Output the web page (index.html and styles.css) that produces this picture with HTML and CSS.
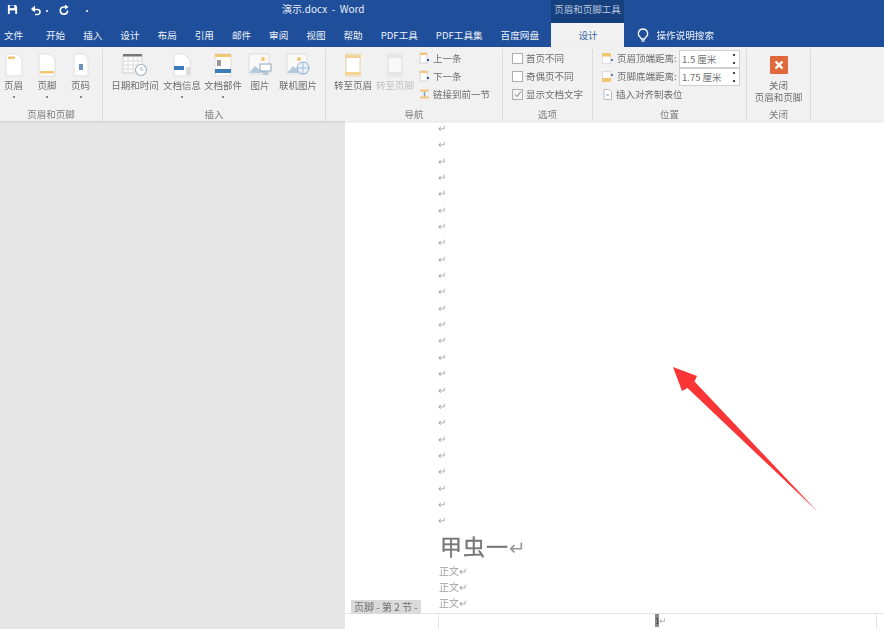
FILE: index.html
```html
<!DOCTYPE html>
<html lang="zh-CN">
<head>
  <meta charset="UTF-8" />
  <title>演示.docx - Word</title>
  <link rel="stylesheet" href="styles.css">
</head>
<body>
  <div class="window">
    <div class="titlebar">
      <div class="qat">
        <svg class="qat-save" width="11" height="11" viewBox="0 0 12 12"><path d="M1 1h8.500L11 2.500V11H1z" fill="#fff"/><rect x="3" y="1.500" width="5" height="3" fill="#1f4f9b"/><rect x="3" y="7" width="6" height="4" fill="#1f4f9b"/></svg>
        <svg class="qat-undo" width="12" height="12" viewBox="0 0 12 12"><path d="M2 5.500h5.500a2.500 2.500 0 0 1 0 5H5" fill="none" stroke="#fff" stroke-width="1.600"/><path d="M5 1.500v7L1 5z" fill="#fff"/></svg>
        <span class="qat-dot q1"></span>
        <svg class="qat-redo" width="12" height="12" viewBox="0 0 12 12"><path d="M7.500 3H5.500a3.600 3.600 0 1 0 4 3.500" fill="none" stroke="#fff" stroke-width="1.600"/><path d="M7 .5v5L10.500 3z" fill="#fff"/></svg>
        <span class="qat-dot q2"></span>
      </div>
      <div class="doc-title">演示.docx&nbsp; -&nbsp; Word</div>
      <div class="context-title">页眉和页脚工具</div>
    </div>

    <div class="tabs">
      <span class="tab tab-file">文件</span>
      <span class="tab">开始</span>
      <span class="tab">插入</span>
      <span class="tab">设计</span>
      <span class="tab">布局</span>
      <span class="tab">引用</span>
      <span class="tab">邮件</span>
      <span class="tab">审阅</span>
      <span class="tab">视图</span>
      <span class="tab">帮助</span>
      <span class="tab">PDF工具</span>
      <span class="tab">PDF工具集</span>
      <span class="tab">百度网盘</span>
      <span class="tab tab-active">设计</span>
      <span class="tell-me">
        <svg width="12" height="15" viewBox="0 0 12 15"><path d="M6 1a4.600 4.600 0 0 0-2.600 8.400L4.400 11h3.200l1-1.600A4.600 4.600 0 0 0 6 1z" fill="none" stroke="#fff" stroke-width="1.300"/><path d="M4.500 13h3" stroke="#fff" stroke-width="1.400"/></svg>
        操作说明搜索
      </span>
    </div>

    <div class="ribbon">
      <section class="group g-hf">
        <div class="group-body">
          <div class="rb rb-a">
            <svg class="rb-icon" width="20" height="24" viewBox="0 0 20 24"><path class="sheet" d="M2 1h11l5 5v17H2z"/><rect x="4" y="3.500" width="7" height="2.500" fill="#f3c674"/></svg>
            <span>页眉</span><i class="caret"></i>
          </div>
          <div class="rb rb-b">
            <svg class="rb-icon" width="20" height="24" viewBox="0 0 20 24"><path class="sheet" d="M2 1h11l5 5v17H2z"/><rect x="3" y="18" width="14" height="2.500" fill="#f3c674"/></svg>
            <span>页脚</span><i class="caret"></i>
          </div>
          <div class="rb rb-c">
            <svg class="rb-icon" width="20" height="24" viewBox="0 0 20 24"><path class="sheet" d="M3 1h10l4 5v17H3z"/><rect x="8" y="11" width="4" height="6" fill="#6f8fbd"/></svg>
            <span>页码</span><i class="caret"></i>
          </div>
        </div>
        <div class="group-label">页眉和页脚</div>
      </section>

      <section class="group g-insert">
        <div class="group-body">
          <div class="rb rb-date">
            <svg class="rb-icon" width="26" height="24" viewBox="0 0 26 24"><rect x="1" y="2" width="19" height="18" fill="#fbfbfb" stroke="#d2d2d2"/><rect x="1" y="1" width="19" height="2.500" fill="#777"/><path d="M1 8h19M1 12h19M1 16h19M6 4v16M11 4v16M16 4v16" stroke="#dcdcdc"/><circle cx="19" cy="17" r="5.500" fill="#fff" stroke="#9fb0c2" stroke-width="1.200"/><path d="M19 14v3h2.500" fill="none" stroke="#9fb0c2"/></svg>
            <span>日期和时间</span>
          </div>
          <div class="rb rb-info">
            <svg class="rb-icon" width="20" height="24" viewBox="0 0 20 24"><path class="sheet" d="M2 1h10l6 6v16H2z"/><rect x="2" y="13" width="10" height="4" fill="#3d7cb8"/><rect x="14" y="14" width="4" height="8" fill="#dcdcdc"/></svg>
            <span>文档信息</span><i class="caret"></i>
          </div>
          <div class="rb rb-part">
            <svg class="rb-icon" width="18" height="24" viewBox="0 0 18 24"><rect x="1" y="1" width="16" height="22" fill="#fff" stroke="#dcdcdc"/><rect x="1" y="1" width="16" height="3" fill="#f3c674"/><rect x="3" y="7" width="4" height="6" fill="#999"/><rect x="1" y="16" width="16" height="4" fill="#3d7cb8"/></svg>
            <span>文档部件</span><i class="caret"></i>
          </div>
          <div class="rb rb-pic">
            <svg class="rb-icon" width="24" height="24" viewBox="0 0 24 24"><rect x="1" y="1" width="20" height="20" fill="#f9f9f9" stroke="#dedede"/><circle cx="15" cy="6" r="2" fill="#f3c674"/><path d="M1 20l6-7 5 4 3-2 6 5z" fill="#b7cadc"/><rect x="12" y="11" width="11" height="7" fill="#fff" stroke="#8ea5bd"/><path d="M15 21h5" stroke="#8ea5bd"/></svg>
            <span>图片</span>
          </div>
          <div class="rb rb-online">
            <svg class="rb-icon" width="24" height="24" viewBox="0 0 24 24"><rect x="1" y="1" width="20" height="20" fill="#f9f9f9" stroke="#dedede"/><circle cx="13" cy="6" r="2" fill="#f3c674"/><path d="M1 20l6-7 5 4 3-2 6 5z" fill="#b7cadc"/><circle cx="17" cy="15" r="6" fill="#e9f1f8" stroke="#8eacce"/><path d="M17 9v12M11 15h12" stroke="#8eacce" stroke-width=".7"/></svg>
            <span>联机图片</span>
          </div>
        </div>
        <div class="group-label">插入</div>
      </section>

      <section class="group g-nav">
        <div class="group-body">
          <div class="rb rb-goto">
            <svg class="rb-icon" width="18" height="24" viewBox="0 0 18 24"><rect x="2" y="1" width="14" height="22" fill="#fff" stroke="#e8d2a6"/><rect x="1" y="2" width="16" height="3" fill="#f3d294"/><rect x="1" y="19" width="16" height="3" fill="#f3d294"/></svg>
            <span>转至页眉</span>
          </div>
          <div class="rb rb-goto off">
            <svg class="rb-icon" width="18" height="24" viewBox="0 0 18 24"><rect x="2" y="1" width="14" height="22" fill="#f8f8f8" stroke="#dcdcdc"/><rect x="1" y="2" width="16" height="3" fill="#e5e5e5"/><rect x="1" y="19" width="16" height="3" fill="#e5e5e5"/></svg>
            <span>转至页脚</span>
          </div>
          <div class="nav-list">
            <div class="row">
              <svg width="11" height="12" viewBox="0 0 11 12"><rect x="1" y="1" width="7" height="10" fill="#fff" stroke="#d2d2d2"/><rect x="1" y="1" width="7" height="2" fill="#f3c674"/><rect x="8" y="7" width="2" height="2" fill="#2a5a9c"/></svg>
              上一条
            </div>
            <div class="row">
              <svg width="11" height="12" viewBox="0 0 11 12"><rect x="1" y="1" width="7" height="10" fill="#fff" stroke="#d2d2d2"/><rect x="1" y="1" width="7" height="2" fill="#f3c674"/><rect x="8" y="7" width="2" height="2" fill="#2a5a9c"/></svg>
              下一条
            </div>
            <div class="row">
              <svg width="11" height="12" viewBox="0 0 11 12"><path d="M1 2.500h9M1 9.500h9" stroke="#f3c674" stroke-width="2"/><path d="M5.500 3.500v5" stroke="#7f9fc6" stroke-width="1.500"/></svg>
              链接到前一节
            </div>
          </div>
        </div>
        <div class="group-label">导航</div>
      </section>

      <section class="group g-opt">
        <div class="group-body">
          <div class="opt-list">
            <label class="row"><span class="check"></span>首页不同</label>
            <label class="row"><span class="check"></span>奇偶页不同</label>
            <label class="row"><span class="check checked"><svg width="8" height="8" viewBox="0 0 8 8"><path d="M1 4.500l2 2 4-5" fill="none" stroke="#777"/></svg></span>显示文档文字</label>
          </div>
        </div>
        <div class="group-label">选项</div>
      </section>

      <section class="group g-pos">
        <div class="group-body">
          <div class="pos-list">
            <div class="row">
              <svg width="11" height="11" viewBox="0 0 11 11"><rect x=".5" y=".5" width="8" height="10" fill="#fff" stroke="#ddd"/><rect x="0" y="0" width="9" height="3.500" fill="#f3c674"/><path d="M9 7h2" stroke="#2a5a9c" stroke-width="1.400"/></svg>
              <span class="pos-label">页眉顶端距离:</span>
              <span class="spin">1.5 厘米<i class="arrows"></i></span>
            </div>
            <div class="row">
              <svg width="11" height="11" viewBox="0 0 11 11"><rect x=".5" y=".5" width="8" height="10" fill="#fff" stroke="#ddd"/><rect x="0" y="7" width="9" height="4" fill="#f3c674"/><path d="M9 4h2" stroke="#2a5a9c" stroke-width="1.400"/></svg>
              <span class="pos-label">页脚底端距离:</span>
              <span class="spin">1.75 厘米<i class="arrows"></i></span>
            </div>
            <div class="row row-tab">
              <svg width="9" height="11" viewBox="0 0 9 11"><path d="M1 .5h5l2.500 2.500v7.500H1z" fill="#fff" stroke="#bdbdbd"/><path d="M3 6h3" stroke="#7f9fc6"/></svg>
              插入对齐制表位
            </div>
          </div>
        </div>
        <div class="group-label">位置</div>
      </section>

      <section class="group g-close">
        <div class="group-body">
          <div class="rb rb-close">
            <svg class="close-icon" width="18" height="18" viewBox="0 0 18 18"><rect width="18" height="18" rx="1" fill="#e0683a"/><path d="M5.500 5.500l7 7M12.500 5.500l-7 7" stroke="#fff" stroke-width="2.400"/></svg>
            <span>关闭<br>页眉和页脚</span>
          </div>
        </div>
        <div class="group-label">关闭</div>
      </section>
    </div>

    <div class="workspace">
      <aside class="nav-pane"></aside>
      <main class="page">
        <div class="body-text">
          <p class="mark">↵</p><p class="mark">↵</p><p class="mark">↵</p><p class="mark">↵</p><p class="mark">↵</p>
          <p class="mark">↵</p><p class="mark">↵</p><p class="mark">↵</p><p class="mark">↵</p><p class="mark">↵</p>
          <p class="mark">↵</p><p class="mark">↵</p><p class="mark">↵</p><p class="mark">↵</p><p class="mark">↵</p>
          <p class="mark">↵</p><p class="mark">↵</p><p class="mark">↵</p><p class="mark">↵</p><p class="mark">↵</p>
          <p class="mark">↵</p><p class="mark">↵</p><p class="mark">↵</p><p class="mark">↵</p><p class="mark">↵</p>
          <h1 class="heading">甲虫一<span class="heading-mark">↵</span></h1>
          <p class="mark para">正文↵</p>
          <p class="mark para">正文↵</p>
          <p class="mark para">正文↵</p>
        </div>
        <div class="footer-zone">
          <div class="footer-corner"></div>
          <div class="footer-line"><span class="cursor">1</span>↵</div>
          <div class="footer-end"></div>
        </div>
        <div class="footer-tag">页脚 - 第 2 节 -</div>
      </main>
    </div>

    <svg class="arrow" width="150" height="150" viewBox="0 0 150 150"><path d="M2 2L26 11 23.500 16.500 146.500 146.500 16.500 23 11 26z" fill="#f93535"/></svg>
  </div>
</body>
</html>
```

FILE: styles.css
```css
* {
  box-sizing: border-box;
}
html, body {
  margin: 0;
  height: 100%;
}
body {
  font-family: "Noto Sans CJK SC", "Liberation Sans", sans-serif;
  font-size: 9.5px;
  color: #6e6e6e;
  background: #e6e6e6;
  overflow: hidden;
}
/* the source is a soft video frame */
.window {
  position: relative;
  width: 884px;
  height: 629px;
  display: flex;
  flex-direction: column;
  overflow: hidden;
  filter: blur(0.35px);
}

/* title bar */
.titlebar {
  height: 23px;
  flex: none;
  display: flex;
  background: #1f4f9b;
  color: #fff;
}
.qat {
  width: 282px;
  flex: none;
  display: flex;
  align-items: flex-start;
  padding: 4px 0 0 7px;
}
.qat-undo { margin-left: 12px; }
.qat-redo { margin-left: 10px; }
.qat-dot {
  width: 2px;
  height: 2px;
  margin-top: 6px;
  background: #c7d5ea;
}
.q1 { margin-left: 4px; }
.q2 { margin-left: 16px; }
.doc-title {
  width: 269px;
  flex: none;
  padding-top: 1px;
  line-height: 16px;
  font-size: 10px;
  color: #e8eef7;
}
.context-title {
  width: 73px;
  flex: none;
  background: #17407f;
  color: #b9c8df;
  text-align: center;
  line-height: 18px;
}

/* tabs */
.tabs {
  height: 24px;
  flex: none;
  display: flex;
  align-items: center;
  gap: 18px;
  padding-left: 4px;
  background: #1f4f9b;
  color: #eef2f8;
  font-size: 9.6px;
}
.tab {
  line-height: 24px;
  white-space: nowrap;
}
.tab-file { margin-right: 4.8px; }
.tab-active {
  width: 73px;
  margin-left: -5.5px;
  background: #f1f1f1;
  color: #3a68a8;
  text-align: center;
}
.tell-me {
  margin-left: -5px;
  display: flex;
  align-items: center;
  gap: 7px;
}

/* ribbon */
.ribbon {
  height: 74px;
  flex: none;
  display: flex;
  background: #f1f1f1;
  box-shadow: 0 1px 2px rgba(0,0,0,0.12);
  position: relative;
  z-index: 1;
}
.group {
  flex: none;
  display: flex;
  flex-direction: column;
  border-right: 1px solid #dcdcdc;
  margin-top: 2px;
}
.g-hf { width: 103px; }
.g-insert { width: 223px; }
.g-nav { width: 177px; }
.g-opt { width: 90px; }
.g-pos { width: 154px; }
.g-close { width: 64px; }
.group-body {
  flex: 1;
  display: flex;
  min-height: 0;
}
.group-label {
  height: 14px;
  line-height: 15px;
  text-align: center;
  color: #7d7d7d;
}
.rb {
  display: flex;
  flex-direction: column;
  align-items: center;
  padding-top: 4px;
  line-height: 12px;
  white-space: nowrap;
}
.rb span {
  margin-top: 2px;
}
.rb-icon {
  flex: none;
}
.sheet {
  fill: #fff;
  stroke: #dedede;
  stroke-width: 1;
}
.caret {
  width: 2px;
  height: 2px;
  margin-top: 5px;
  background: #888;
}
.rb-a { width: 27px; }
.rb-b { width: 40px; }
.rb-c { width: 27px; }
.g-insert .group-body { padding-left: 8px; }
.rb-date { width: 48px; }
.rb-info { width: 38px; margin-left: 4px; }
.rb-part { width: 38px; margin-left: 3px; }
.rb-pic { width: 24px; margin-left: 6px; }
.rb-online { width: 38px; margin-left: 7px; }
.g-nav .group-body { padding-left: 8px; }
.rb-goto { width: 38px; margin-right: 4px; }
.rb-goto.off { color: #c2c2c2; }
.nav-list, .opt-list, .pos-list {
  display: flex;
  flex-direction: column;
}
.nav-list { margin-left: 1px; }
.opt-list { padding-left: 9px; }
.pos-list { padding-left: 9px; }
.row {
  height: 18px;
  display: flex;
  align-items: center;
  gap: 3px;
  white-space: nowrap;
}
.check {
  width: 11px;
  height: 11px;
  display: flex;
  align-items: center;
  justify-content: center;
  background: #fff;
  border: 1px solid #aeaeae;
}
.check.checked {
  background: #f4f4f4;
}
.pos-label {
  width: 59px;
  margin-left: 1px;
}
.spin {
  position: relative;
  width: 61px;
  height: 18px;
  margin-top: 1px;
  padding-left: 2px;
  line-height: 16px;
  background: #fff;
  border: 1px solid #d0d0d0;
}
.arrows::before, .arrows::after {
  content: "";
  position: absolute;
  right: 4px;
  width: 2px;
  height: 2px;
  background: #444;
}
.arrows::before { top: 3px; }
.arrows::after { bottom: 3px; }
.row-tab {
  gap: 4px;
  padding-left: 1px;
}
.rb-close {
  width: 100%;
  padding-top: 7px;
}
.rb-close span {
  margin-top: 5px;
  text-align: center;
}
.close-icon {
  flex: none;
}

/* document area */
.workspace {
  flex: 1;
  display: flex;
  min-height: 0;
}
.nav-pane {
  width: 345px;
  flex: none;
  background: #e6e6e6;
}
.page {
  flex: 1;
  position: relative;
  display: flex;
  flex-direction: column;
  background: #fff;
  min-width: 0;
}
.body-text {
  height: 492px;
  flex: none;
  padding-left: 93px;
}
.mark {
  margin: 0;
  height: 16.35px;
  line-height: 16.35px;
  font-size: 10px;
  color: #a3a3a3;
}
.mark:first-child {
  margin-top: -1px;
}
.heading {
  margin: 0;
  height: 34px;
  padding-left: 2px;
  line-height: 32px;
  font-size: 22px;
  font-weight: 400;
  letter-spacing: 1px;
  color: #777;
  -webkit-text-stroke: 0.3px #777;
}
.heading-mark {
  font-size: 20px;
  color: #999;
  -webkit-text-stroke: 0;
}
.para {
  padding-left: 1px;
  color: #a0a0a0;
}
.footer-zone {
  flex: 1;
  display: flex;
  border-top: 1px solid #e4e4e4;
  color: #aaa;
}
.footer-corner {
  width: 94px;
  border-right: 1px solid #e4e4e4;
}
.footer-line {
  width: 437px;
  padding-left: 216px;
  line-height: 14px;
  font-size: 9px;
}
.footer-end {
  border-left: 1px solid #e4e4e4;
}
.cursor {
  display: inline-block;
  width: 4px;
  height: 13px;
  background: #8a8a8a;
  color: #444;
  font-size: 8px;
  line-height: 13px;
}
.footer-tag {
  position: absolute;
  left: 6px;
  top: 479px;
  height: 14px;
  padding: 0 3px;
  line-height: 14px;
  background: #dadada;
  color: #6e6e6e;
  font-size: 10px;
}

.arrow {
  position: absolute;
  left: 671px;
  top: 365px;
}
```
